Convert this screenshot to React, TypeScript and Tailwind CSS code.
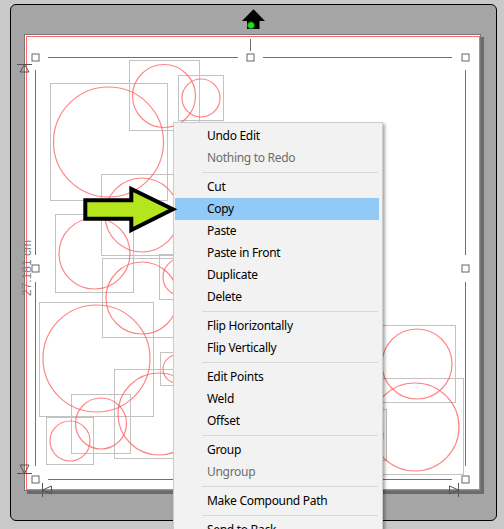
type MenuEntry = { label?: string, disabled?: boolean, active?: boolean, sep?: boolean }

const menu: MenuEntry[] = [
  { label: 'Undo Edit' },
  { label: 'Nothing to Redo', disabled: true },
  { sep: true },
  { label: 'Cut' },
  { label: 'Copy', active: true },
  { label: 'Paste' },
  { label: 'Paste in Front' },
  { label: 'Duplicate' },
  { label: 'Delete' },
  { sep: true },
  { label: 'Flip Horizontally' },
  { label: 'Flip Vertically' },
  { sep: true },
  { label: 'Edit Points' },
  { label: 'Weld' },
  { label: 'Offset' },
  { sep: true },
  { label: 'Group' },
  { label: 'Ungroup', disabled: true },
  { sep: true },
  { label: 'Make Compound Path' },
  { sep: true },
  { label: 'Send to Back' },
  { label: 'Bring to Front' },
]

// circles on the mat, each with its bounding box (page coordinates)
const shapes = [
  { x: 50.5, y: 83.5, s: 117, cx: 108.5, cy: 142, r: 55 },
  { x: 129.5, y: 60.5, s: 70, cx: 164, cy: 96, r: 31.5 },
  { x: 178.5, y: 75.5, s: 45, cx: 201, cy: 98, r: 19 },
  { x: 101.5, y: 174.5, s: 81, cx: 142, cy: 215, r: 37 },
  { x: 55.5, y: 214.5, s: 78, cx: 94.5, cy: 253.5, r: 35.5 },
  { x: 102.5, y: 258.5, s: 79, cx: 142, cy: 298, r: 36 },
  { x: 159.5, y: 254.5, s: 45, cx: 182, cy: 277, r: 19 },
  { x: 39.5, y: 302.5, s: 114, cx: 96.5, cy: 358.5, r: 53.5 },
  { x: 160.5, y: 352.5, s: 33, cx: 177, cy: 369, r: 14 },
  { x: 114.5, y: 369.5, s: 89, cx: 159, cy: 414, r: 41 },
  { x: 71.5, y: 394.5, s: 59, cx: 101, cy: 423.5, r: 25.5 },
  { x: 46.5, y: 417.5, s: 47, cx: 70, cy: 441, r: 20 },
  { x: 378.5, y: 325.5, s: 77, cx: 417, cy: 364, r: 35 },
  { x: 367.5, y: 378.5, s: 96, cx: 415, cy: 427, r: 44 },
  { x: 335.5, y: 409.5, s: 51, cx: 361, cy: 435, r: 22 },
]

const handles: [number, number][] = [
  [35, 57], [250, 57], [465, 57],
  [35, 268], [465, 268],
  [35, 479], [250, 479], [465, 479],
]

function MoveArrow() {
  return (
    <svg width="24" height="21" viewBox="0 0 24 21" className="block ml-[218px] mt-[4px]">
      <path d="M11.5 0.3 L23 12 L17.5 12 L17.5 20 L5 20 L5 12 L0 12 Z" fill="#000" />
      <circle cx="9" cy="16.3" r="3.5" fill="#19e619" stroke="#0a5a0a" strokeWidth="1" />
    </svg>
  )
}

function Mat() {
  return (
    <svg
      width="457"
      height="457"
      viewBox="24 34 457 457"
      className="absolute inset-0 overflow-visible"
    >
      <rect x="24.5" y="34.5" width="456" height="456" fill="none" stroke="#787878" />
      <rect x="26.5" y="36.5" width="453" height="453" fill="none" stroke="#ff6b6b" />

      {shapes.map((s, i) => (
        <rect key={i} x={s.x} y={s.y} width={s.s} height={s.s} fill="none" stroke="#c2c2c2" />
      ))}
      {shapes.map((s, i) => (
        <circle key={i} cx={s.cx} cy={s.cy} r={s.r} fill="none" stroke="#ff5c5c" strokeOpacity="0.75" strokeWidth="1.2" />
      ))}

      <g stroke="#6f6f6f" strokeWidth="1">
        <line x1="48" y1="57.5" x2="238" y2="57.5" />
        <line x1="263" y1="57.5" x2="452" y2="57.5" />
        <line x1="48" y1="479.5" x2="238" y2="479.5" />
        <line x1="263" y1="479.5" x2="452" y2="479.5" />
        <line x1="35.5" y1="70" x2="35.5" y2="255" />
        <line x1="35.5" y1="282" x2="35.5" y2="466" />
        <line x1="465.5" y1="70" x2="465.5" y2="255" />
        <line x1="465.5" y1="282" x2="465.5" y2="466" />
        <line x1="250.5" y1="39" x2="250.5" y2="51" />
      </g>
      {handles.map(([x, y], i) => (
        <rect key={i} x={x - 3} y={y - 3} width="7" height="7" fill="#fff" stroke="#666" />
      ))}

      <g stroke="#555" strokeWidth="1" fill="none">
        <line x1="17" y1="64.5" x2="32" y2="64.5" />
        <path d="M24.5 64.5 L20 72 L29 72 Z" />
        <line x1="17" y1="473.5" x2="32" y2="473.5" />
        <path d="M24.5 473.5 L20 465 L29 465 Z" />
        <line x1="42.5" y1="483" x2="42.5" y2="497" />
        <path d="M42.5 490 L51.5 486 L51.5 494 Z" />
        <line x1="458.5" y1="483" x2="458.5" y2="497" />
        <path d="M458.5 490 L449.5 486 L449.5 494 Z" />
      </g>

      <text
        transform="translate(31 268) rotate(-90)"
        textAnchor="middle"
        fontSize="12"
        fill="#808080"
        fontFamily="'Liberation Sans', Arial, sans-serif"
      >
        27.181 cm
      </text>
    </svg>
  )
}

function ContextMenu() {
  return (
    <div className="absolute left-[173px] top-[122px] w-[210px] bg-[#f2f2f2] border border-[#cccccc] p-px pt-[2px] shadow-[2px_2px_3px_rgba(0,0,0,0.35)] font-['Segoe_UI','Noto_Sans',sans-serif] text-[12px] tracking-[-0.3px] leading-none">
      {menu.map((m, i) =>
        m.sep
          ? (
              <div key={i} className="h-[7px] flex items-center pl-[27px] pr-[3px]">
                <div className="h-px w-full bg-[#d7d7d7]" />
              </div>
            )
          : (
              <div
                key={i}
                className={`h-[22px] flex items-center pl-[32px] mr-[2px] ${m.active ? 'bg-[#91c9f7]' : ''} ${m.disabled ? 'text-[#6d6d6d]' : 'text-black'}`}
              >
                {m.label}
              </div>
            ),
      )}
    </div>
  )
}

function PointerArrow() {
  return (
    <svg width="504" height="529" className="absolute inset-0 pointer-events-none">
      <path
        d="M85.3 200.3 L131.3 200.3 L131.3 189 L172.8 209.3 L131.3 230 L131.3 218.7 L85.3 218.7 Z"
        fill="#b5e61d"
        stroke="#000"
        strokeWidth="4"
        strokeLinejoin="miter"
      />
    </svg>
  )
}

export default function App() {
  return (
    <div className="relative w-[504px] h-[529px] overflow-hidden bg-[#c9c9c9] pt-[4px] pl-[10px]">
      <div className="w-[487px] h-[517px] rounded-[6px] border border-black bg-[#a5a5a5] pl-[13px]">
        <MoveArrow />
        <div className="relative mt-[4px] w-[457px] h-[457px] bg-white shadow-[3px_3px_0_#6b6b6b]">
          <Mat />
        </div>
      </div>
      <ContextMenu />
      <PointerArrow />
    </div>
  )
}
